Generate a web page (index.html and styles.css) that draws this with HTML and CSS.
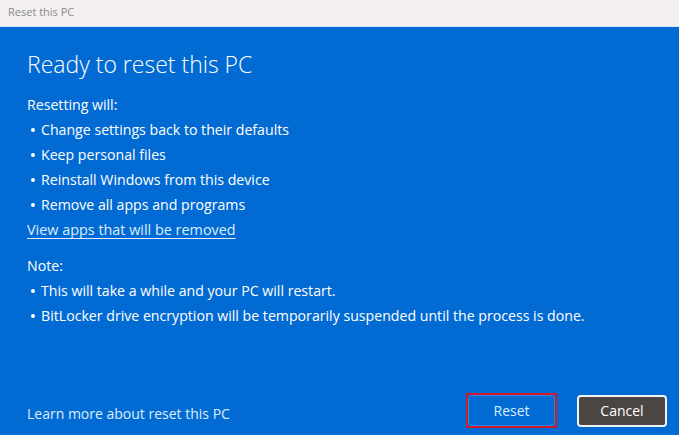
FILE: index.html
```html
<!DOCTYPE html>
<html lang="en">
<head>
<meta charset="utf-8">
<link rel="stylesheet" href="styles.css">
</head>
<body>
<div class="window">
  <div class="titlebar">Reset this PC</div>
  <div class="content">
    <div class="main">
      <h1 class="heading">Ready to reset this PC</h1>
      <p class="label">Resetting will:</p>
      <ul class="list">
        <li>Change settings back to their defaults</li>
        <li>Keep personal files</li>
        <li>Reinstall Windows from this device</li>
        <li>Remove all apps and programs</li>
      </ul>
      <a class="link" href="#">View apps that will be removed</a>
      <p class="label note">Note:</p>
      <ul class="list">
        <li>This will take a while and your PC will restart.</li>
        <li>BitLocker drive encryption will be temporarily suspended until the process is done.</li>
      </ul>
    </div>
    <div class="footer">
      <span class="learn">Learn more about reset this PC</span>
      <div class="buttons">
        <div class="highlight"><button class="btn btn-reset">Reset</button></div>
        <button class="btn btn-cancel">Cancel</button>
      </div>
    </div>
  </div>
</div>
</body>
</html>
```
FILE: styles.css
```css
* { box-sizing: border-box; }
html, body { margin: 0; padding: 0; }
body {
  width: 679px;
  height: 435px;
  overflow: hidden;
  font-family: "Open Sans", "Noto Sans", sans-serif;
  color: #fff;
}
.window { display: flex; flex-direction: column; height: 435px; }
.titlebar {
  height: 27px;
  background: #f4eff1;
  color: #8a8a8a;
  font-size: 11px;
  line-height: 24px;
  padding-left: 8px;
  border-bottom: 1px solid #d8e6f2;
}
.content {
  flex: 1;
  background: #026bd3;
  display: flex;
  flex-direction: column;
  justify-content: space-between;
  padding: 22px 0 0 27px;
}
.heading {
  margin: 0;
  font-size: 23px;
  font-weight: 300;
  line-height: 30px;
}
.label {
  margin: 13px 0 0;
  font-size: 14.15px;
  line-height: 25px;
}
.note { margin-top: 11px; }
.list {
  list-style: none;
  margin: 0;
  padding: 0;
  font-size: 14.15px;
  line-height: 25px;
}
.list li { position: relative; padding-left: 14px; }
.list li::before {
  content: "";
  position: absolute;
  left: 4px;
  top: 11px;
  width: 4px;
  height: 4px;
  border-radius: 50%;
  background: #fff;
}
.link {
  display: inline-block;
  color: #dceeff;
  font-size: 14.4px;
  line-height: 25px;
  text-decoration: underline;
  text-underline-offset: 3px;
  text-decoration-thickness: 1px;
}
.footer {
  display: flex;
  align-items: center;
  justify-content: space-between;
  padding: 0 12px 7px 0;
}
.learn {
  font-size: 14px;
  color: #dceeff;
  padding-top: 6px;
}
.buttons { display: flex; align-items: center; gap: 20px; }
.highlight {
  border: 2px solid #d0192d;
  width: 91px;
  height: 35px;
  padding: 0;
}
.btn {
  font-family: inherit;
  font-size: 14px;
  color: #fff;
  border-radius: 4px;
  cursor: pointer;
}
.btn-reset {
  width: 87px;
  height: 31px;
  background: #026bd3;
  border: 1px solid #2b86e0;
  color: #d8ecff;
}
.btn-cancel {
  width: 90px;
  height: 32px;
  background: #4b4643;
  border: 2px solid #f0f4f8;
}
```
